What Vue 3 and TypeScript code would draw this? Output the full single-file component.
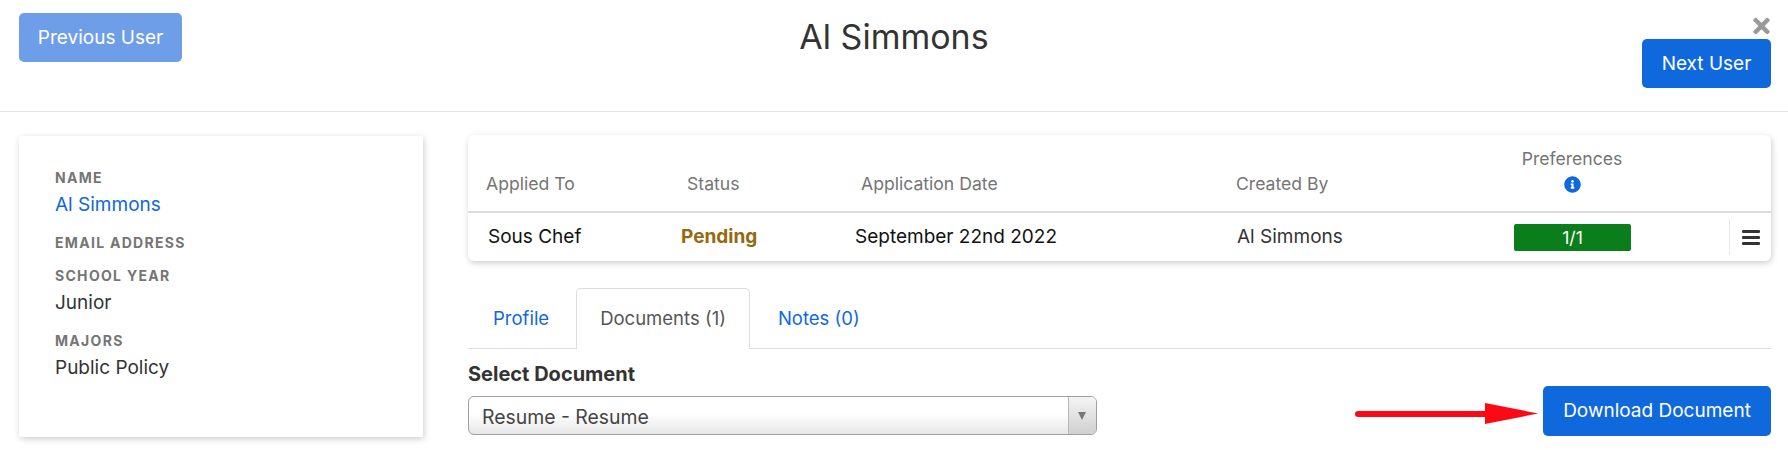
<script setup lang="ts">
const details = [
  { label: 'Name', value: 'Al Simmons', link: true },
  { label: 'Email Address', value: '', link: false },
  { label: 'School Year', value: 'Junior', link: false },
  { label: 'Majors', value: 'Public Policy', link: false },
]
</script>

<template>
  <div class="page">
    <header class="top">
      <button class="btn prev">Previous User</button>
      <h1 class="title">Al Simmons</h1>
      <button class="btn next">Next User</button>
      <svg class="close" viewBox="0 0 352 512" aria-label="Close">
        <path fill="#999" d="M242.72 256l100.07-100.07c12.28-12.28 12.28-32.19 0-44.48l-22.24-22.24c-12.28-12.28-32.19-12.28-44.48 0L176 189.28 75.93 89.21c-12.28-12.28-32.19-12.28-44.48 0L9.21 111.45c-12.28 12.28-12.28 32.19 0 44.48L109.28 256 9.21 356.07c-12.28 12.28-12.28 32.19 0 44.48l22.24 22.24c12.28 12.28 32.2 12.28 44.48 0L176 322.72l100.07 100.07c12.28 12.28 32.2 12.28 44.48 0l22.24-22.24c12.28-12.28 12.28-32.19 0-44.48L242.72 256z" />
      </svg>
    </header>

    <main class="body">
      <aside class="card">
        <div v-for="d in details" :key="d.label" class="field">
          <div class="label">{{ d.label }}</div>
          <div v-if="d.value" class="value" :class="{ link: d.link }">{{ d.value }}</div>
        </div>
      </aside>

      <section class="content">
        <div class="table">
          <div class="thead">
            <span>Applied To</span>
            <span>Status</span>
            <span>Application Date</span>
            <span>Created By</span>
            <span class="pref">
              Preferences
              <svg class="info" viewBox="0 0 512 512">
                <path fill="#0f68dc" d="M256 8C119.043 8 8 119.083 8 256c0 136.997 111.043 248 248 248s248-111.003 248-248C504 119.083 392.957 8 256 8zm0 110c23.196 0 42 18.804 42 42s-18.804 42-42 42-42-18.804-42-42 18.804-42 42-42zm56 254c0 6.627-5.373 12-12 12h-88c-6.627 0-12-5.373-12-12v-24c0-6.627 5.373-12 12-12h12v-64h-12c-6.627 0-12-5.373-12-12v-24c0-6.627 5.373-12 12-12h64c6.627 0 12 5.373 12 12v100h12c6.627 0 12 5.373 12 12v24z" />
              </svg>
            </span>
          </div>
          <div class="trow">
            <span class="cell">Sous Chef</span>
            <span class="cell pending">Pending</span>
            <span class="cell">September 22nd 2022</span>
            <span class="cell creator">Al Simmons</span>
            <span class="badge">1/1</span>
            <span class="menu">
              <svg viewBox="0 0 18 15" width="18" height="15">
                <rect y="0" width="18" height="3" rx="1" fill="#333" />
                <rect y="6" width="18" height="3" rx="1" fill="#333" />
                <rect y="12" width="18" height="3" rx="1" fill="#333" />
              </svg>
            </span>
          </div>
        </div>

        <nav class="tabs">
          <a class="tab">Profile</a>
          <a class="tab active">Documents (1)</a>
          <a class="tab">Notes (0)</a>
        </nav>

        <div class="doc-row">
          <div class="doc-select">
            <label class="doc-label">Select Document</label>
            <div class="select">
              <span class="select-text">Resume - Resume</span>
              <span class="select-arrow"></span>
            </div>
          </div>
          <svg class="arrow" width="187" height="24" viewBox="0 0 187 24">
            <line x1="5" y1="13" x2="135" y2="13" stroke="#fb0a15" stroke-width="6" stroke-linecap="round" />
            <polygon points="132,2 185,12.5 132,23" fill="#fb0a15" />
          </svg>
          <button class="btn download">Download Document</button>
        </div>
      </section>
    </main>
  </div>
</template>

<style>
html, body { margin: 0; background: #fff; }
</style>

<style scoped>
.page {
  width: 1788px;
  height: 450px;
  overflow: hidden;
  background: #fff;
  font-family: Inter, "Liberation Sans", sans-serif;
  font-size: 19px;
  color: #333;
  box-sizing: border-box;
}
.top {
  position: relative;
  height: 112px;
  border-bottom: 1px solid #e3e3e3;
  box-sizing: border-box;
  display: flex;
  align-items: flex-start;
  justify-content: space-between;
  padding: 13px 17px 0 19px;
}
.btn {
  font-family: inherit;
  font-size: 19px;
  font-weight: 400;
  color: #fff;
  background: #0f68dc;
  border: 0;
  border-radius: 5px;
  height: 49px;
  padding: 0;
  box-sizing: border-box;
  white-space: nowrap;
}
.prev { background: #6f9ee8; width: 163px; }
.next { margin-top: 26px; width: 129px; }
.title {
  margin: 5px 0 0 -36px;
  font-size: 34px;
  line-height: 38px;
  font-weight: 400;
  color: #333;
}
.close {
  position: absolute;
  right: 18px;
  top: 14px;
  width: 17px;
  height: 24px;
}
.body {
  display: flex;
  padding: 24px 17px 0 19px;
  gap: 45px;
}
.card {
  width: 404px;
  height: 301px;
  flex: none;
  box-sizing: border-box;
  padding: 34px 36px 0;
  background: #fff;
  border-radius: 2px;
  box-shadow: 1px 2px 6px rgba(0, 0, 0, 0.2);
}
.field { margin-bottom: 17px; }
.label {
  font-size: 14px;
  line-height: 16px;
  font-weight: 700;
  color: #757575;
  letter-spacing: 1.3px;
  text-transform: uppercase;
}
.value {
  font-size: 19px;
  line-height: 26px;
  color: #333;
  margin-top: 6px;
  margin-bottom: 17px;
}
.link { color: #0f68dc; }
.content { flex: 1; min-width: 0; }
.table {
  height: 126px;
  border-radius: 6px;
  background: #fff;
  box-shadow: 1px 2px 6px rgba(0, 0, 0, 0.2);
  margin-top: -1px;
}
.thead {
  height: 78px;
  box-sizing: border-box;
  border-bottom: 2px solid #ddd;
  display: grid;
  grid-template-columns: 201px 174px 375px 286px 1fr;
  padding-left: 18px;
  align-items: end;
  padding-bottom: 17px;
  font-size: 17.6px;
  line-height: 20px;
  color: #757575;
}
.pref {
  width: 100px;
  text-align: center;
  display: flex;
  flex-direction: column;
  align-items: center;
  gap: 7px;
}
.info { width: 17px; height: 17px; display: block; margin-bottom: 1px; }
.trow {
  height: 48px;
  display: grid;
  grid-template-columns: 193px 174px 382px 277px 117px 98px 1fr;
  padding-left: 20px;
  align-items: center;
  color: #111;
}
.cell { padding-bottom: 2px; }
.pending { color: #96690f; font-weight: 700; }
.creator { color: #333; }
.badge {
  height: 27px;
  line-height: 27px;
  text-align: center;
  background: #0a7e1a;
  color: #fff;
  border-radius: 2px;
  font-size: 17.6px;
}
.menu {
  grid-column: 7;
  height: 36px;
  border-left: 1px solid #e8e8e8;
  display: flex;
  align-items: center;
  padding-left: 12px;
}
.tabs {
  display: flex;
  margin-top: 27px;
  padding-left: 1px;
  height: 61px;
  box-sizing: border-box;
  border-bottom: 1px solid #ddd;
  font-size: 18.5px;
}
.tab {
  height: 61px;
  box-sizing: border-box;
  padding: 0 23px;
  margin-right: 3px;
  line-height: 59px;
  color: #0f68dc;
  border: 1px solid transparent;
  border-bottom: 0;
}
.tab.active {
  margin-right: 4px;
  color: #555;
  background: #fff;
  border-color: #ddd;
  border-radius: 5px 5px 0 0;
}
.doc-row {
  display: flex;
  align-items: flex-end;
}
.doc-select { width: 629px; }
.doc-label {
  display: block;
  font-weight: 700;
  font-size: 20px;
  margin-top: 14px;
  line-height: 22px;
  color: #333;
}
.select {
  margin-top: 11px;
  height: 39px;
  box-sizing: border-box;
  border: 1px solid #a0a0a0;
  border-radius: 6px;
  background: linear-gradient(#fff 45%, #e6e6e6);
  display: flex;
  align-items: center;
  justify-content: space-between;
  overflow: hidden;
}
.select-text { padding: 3px 0 0 13px; color: #444; font-size: 19.4px; }
.select-arrow {
  width: 27px;
  height: 100%;
  border-left: 1px solid #b5b5b5;
  background: linear-gradient(#f4f4f4, #d0d0d0);
  position: relative;
}
.select-arrow::after {
  content: "";
  position: absolute;
  left: 9px;
  top: 15px;
  border-left: 4.5px solid transparent;
  border-right: 4.5px solid transparent;
  border-top: 8px solid #777;
}
.arrow { margin: 0 3px 10px auto; flex: none; }
.download { width: 228px; height: 50px; padding-bottom: 2px; margin-bottom: -1px; }
</style>
